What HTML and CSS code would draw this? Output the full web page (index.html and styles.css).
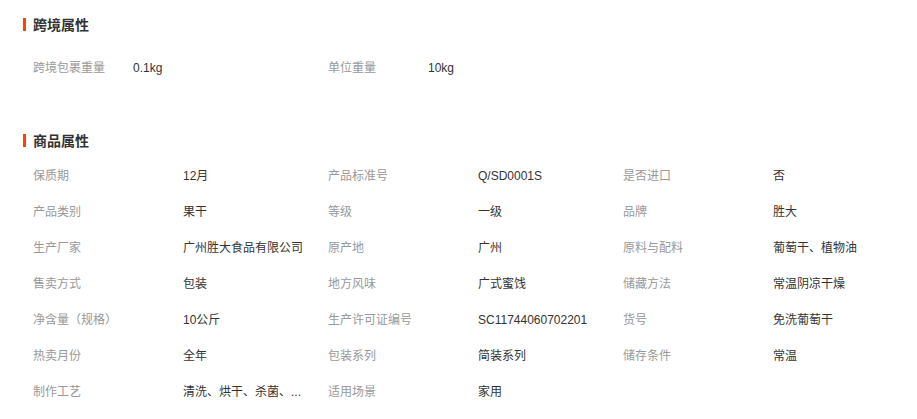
FILE: index.html
```html
<!DOCTYPE html>
<html lang="zh-CN">
<head>
    <meta charset="UTF-8">
    <meta name="viewport" content="width=device-width, initial-scale=1.0">
    <title>商品属性</title>
    <link rel="stylesheet" href="styles.css">
</head>
<body>
    <div class="attr-section">
        <h2 class="attr-title">跨境属性</h2>
        <ul class="attr-list attr-list-cross">
            <li><span class="attr-name">跨境包裹重量</span><span class="attr-value">0.1kg</span></li>
            <li><span class="attr-name">单位重量</span><span class="attr-value">10kg</span></li>
        </ul>
    </div>
    <div class="attr-section">
        <h2 class="attr-title">商品属性</h2>
        <ul class="attr-list">
            <li><span class="attr-name">保质期</span><span class="attr-value">12月</span></li>
            <li><span class="attr-name">产品标准号</span><span class="attr-value">Q/SD0001S</span></li>
            <li><span class="attr-name">是否进口</span><span class="attr-value">否</span></li>
            <li><span class="attr-name">产品类别</span><span class="attr-value">果干</span></li>
            <li><span class="attr-name">等级</span><span class="attr-value">一级</span></li>
            <li><span class="attr-name">品牌</span><span class="attr-value">胜大</span></li>
            <li><span class="attr-name">生产厂家</span><span class="attr-value">广州胜大食品有限公司</span></li>
            <li><span class="attr-name">原产地</span><span class="attr-value">广州</span></li>
            <li><span class="attr-name">原料与配料</span><span class="attr-value">葡萄干、植物油</span></li>
            <li><span class="attr-name">售卖方式</span><span class="attr-value">包装</span></li>
            <li><span class="attr-name">地方风味</span><span class="attr-value">广式蜜饯</span></li>
            <li><span class="attr-name">储藏方法</span><span class="attr-value">常温阴凉干燥</span></li>
            <li><span class="attr-name">净含量（规格）</span><span class="attr-value">10公斤</span></li>
            <li><span class="attr-name">生产许可证编号</span><span class="attr-value">SC11744060702201</span></li>
            <li><span class="attr-name">货号</span><span class="attr-value">免洗葡萄干</span></li>
            <li><span class="attr-name">热卖月份</span><span class="attr-value">全年</span></li>
            <li><span class="attr-name">包装系列</span><span class="attr-value">简装系列</span></li>
            <li><span class="attr-name">储存条件</span><span class="attr-value">常温</span></li>
            <li><span class="attr-name">制作工艺</span><span class="attr-value">清洗、烘干、杀菌、...</span></li>
            <li><span class="attr-name">适用场景</span><span class="attr-value">家用</span></li>
        </ul>
    </div>
</body>
</html>
```

FILE: styles.css
```css
body {
    font-family: "Liberation Sans", "Noto Sans CJK SC", sans-serif;
    font-size: 12px;
    color: #333;
    background: #fff;
    margin: 0;
    padding: 6px 0 0 0;
}
.attr-title {
    display: flex;
    align-items: center;
    height: 36px;
    margin: 0;
    padding-left: 23px;
    font-size: 14px;
    font-weight: bold;
    color: #333;
}
.attr-title::before {
    content: "";
    width: 3px;
    height: 13px;
    margin-right: 7px;
    background: #ff4400;
}
.attr-list {
    list-style: none;
    margin: 0;
    padding: 0 0 0 33px;
    display: grid;
    grid-template-columns: repeat(3, 295px);
}
.attr-list-cross {
    padding-top: 8px;
    padding-bottom: 36px;
}
.attr-list li {
    display: flex;
    height: 36px;
    line-height: 36px;
}
.attr-name {
    width: 150px;
    flex-shrink: 0;
    color: #999;
}
.attr-list-cross .attr-name {
    width: 100px;
}
.attr-value {
    white-space: nowrap;
    color: #333;
}
```
